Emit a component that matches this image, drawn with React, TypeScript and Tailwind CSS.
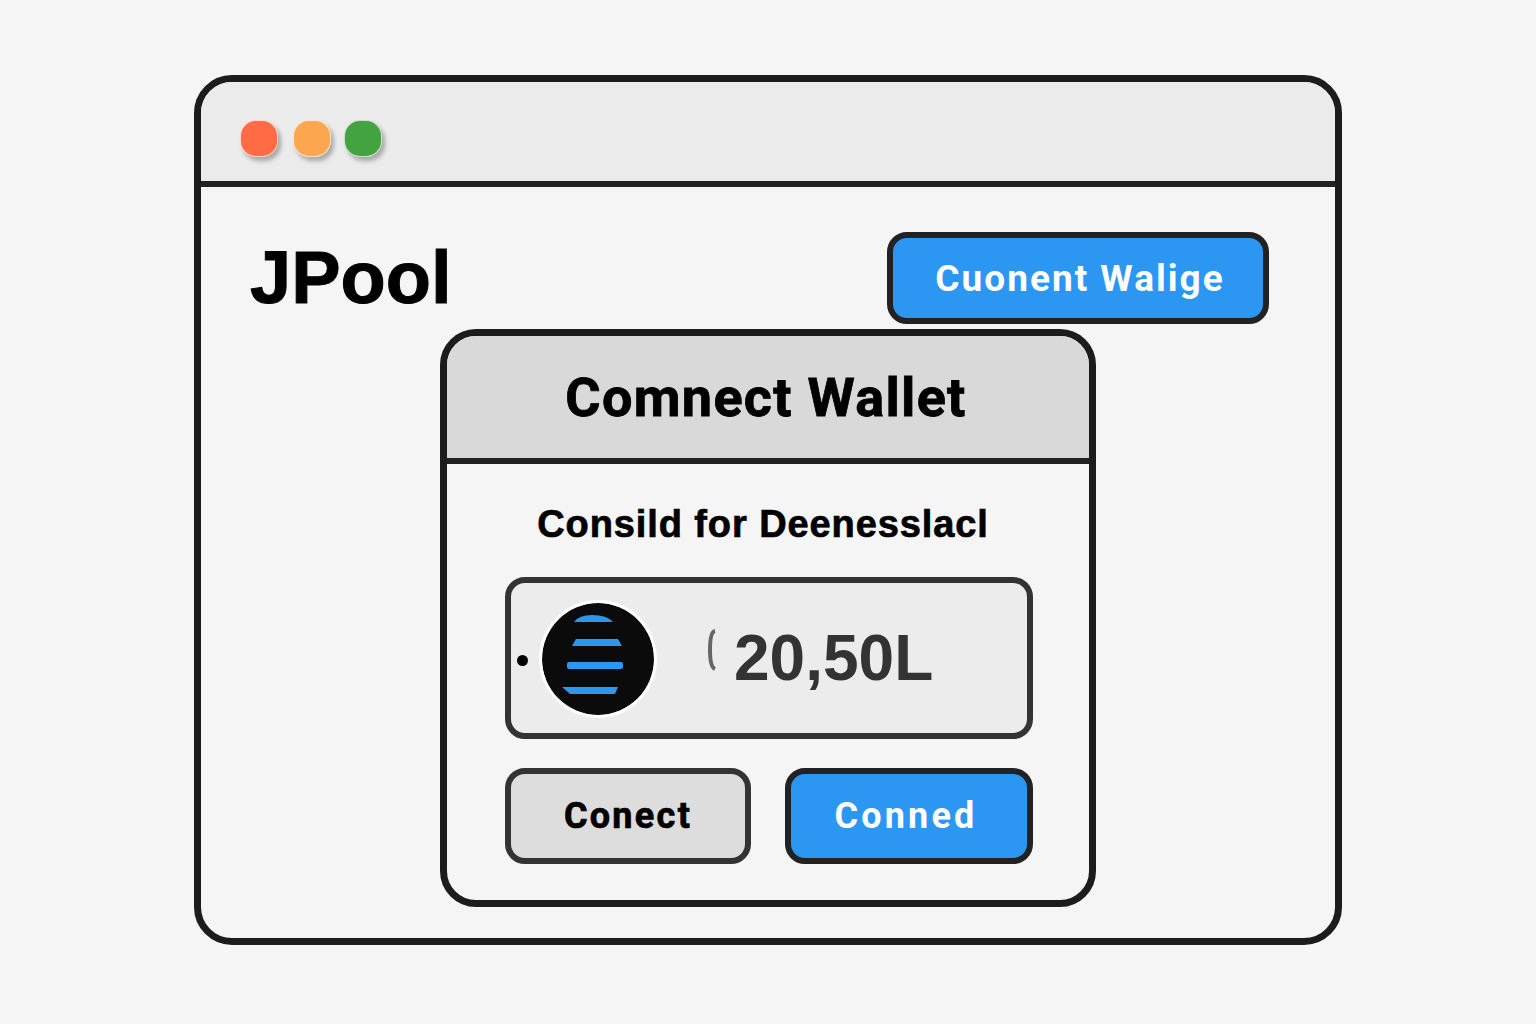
import React from 'react'

const sans = "font-['Liberation_Sans',Arial,sans-serif]"
const robo = "font-['Roboto',Arial,sans-serif]"

const TokenIcon = () => (
  <svg width="112" height="112" viewBox="0 0 112 112" className="shrink-0 rounded-full shadow-[0_0_0_3px_#ffffff]">
    <circle cx="56" cy="56" r="56" fill="#0b0b0c" />
    <g fill="#2b97ee" className="blur-[0.5px]">
      <path d="M32 19 Q37 12 50 12 Q65 12 71 19 Z" />
      <path d="M34 36 H76 L80 43 H30 Z" />
      <rect x="25" y="59" width="56" height="7" rx="2" />
      <path d="M20 84 H76 L73 91 H28 Z" />
    </g>
  </svg>
)

const Dot = ({ color, className }: { color: string; className?: string }) => (
  <div
    className={`h-[37px] w-[38px] rounded-[16px] border border-white/70 shadow-[3px_4px_4px_rgba(0,0,0,0.28)] ${color} ${className || ''}`}
  />
)

const App = () => {
  return (
    <div className={`flex h-screen w-full justify-center bg-[#f5f5f5] pt-[75px] ${sans}`}>
      <div className="h-[870px] w-[1148px] overflow-hidden rounded-[38px] border-[7px] border-[#1c1c1c] bg-[#f5f5f5]">
        {/* title bar */}
        <div className="flex h-[105px] items-center border-b-[6px] border-[#222222] bg-[#ebebeb] pl-[39px] pt-[14px]">
          <Dot color="bg-[#ff6b45]" />
          <Dot color="bg-[#fca650]" className="ml-[15px]" />
          <Dot color="bg-[#43a340]" className="ml-[13px]" />
        </div>

        <div className="pt-[45px]">
          <div className="flex h-[92px] items-center justify-between pl-[49px] pr-[66px]">
            <h1 className="text-[74px] font-bold leading-none tracking-normal text-black [-webkit-text-stroke:1px_black]">JPool</h1>
            <button className={`h-[92px] w-[382px] rounded-[20px] border-[6px] border-[#222222] bg-[#2b97f2] pl-[4px] pt-[2px] text-[37px] font-bold tracking-[2px] text-white ${robo}`}>
              Cuonent Walige
            </button>
          </div>

          {/* modal */}
          <div className="ml-[239px] mt-[5px] h-[578px] w-[656px] overflow-hidden rounded-[36px] border-[7px] border-[#1c1c1c] bg-[#f5f5f5]">
            <div className={`flex h-[128px] items-center justify-center border-b-[6px] border-[#222222] bg-[#d9d9d9] pr-[4px] text-[54px] font-bold tracking-[1.3px] text-black [-webkit-text-stroke:0.8px_black] ${robo}`}>
              Comnect Wallet
            </div>
            <div className="pl-[58px] pr-[56px]">
              <p className="mt-[36px] pr-[12px] text-center text-[38px] font-bold leading-[48px] tracking-[0.9px] text-black [-webkit-text-stroke:0.7px_black]">Consild for Deenesslacl</p>
              <div className="mt-[29px] flex h-[162px] items-center rounded-[20px] border-[6px] border-[#333333] bg-[#ececec] pl-[6px]">
                <div className="mt-[5px] h-[11px] w-[11px] rounded-full bg-black" />
                <div className="ml-[14px] mt-[2px]">
                  <TokenIcon />
                </div>
                <svg width="10" height="42" viewBox="0 0 10 42" className="ml-[53px] mt-[-16px]">
                  <path d="M8 2 Q3 3 3 21 Q3 38 8 40" fill="none" stroke="#666666" strokeWidth="4" />
                </svg>
                <span className="ml-[17px] text-[64px] font-bold leading-none text-[#333333]">20,50L</span>
              </div>
              <div className="mt-[29px] flex gap-[34px]">
                <button className={`h-[96px] w-[246px] rounded-[20px] border-[6px] border-[#333333] bg-[#dddddd] text-[36px] font-bold tracking-[2.3px] text-black [-webkit-text-stroke:0.7px_black] ${robo}`}>
                  Conect
                </button>
                <button className={`h-[96px] w-[248px] rounded-[20px] border-[6px] border-[#222222] bg-[#2b97f2] pr-[6px] text-[36px] font-bold tracking-[3.2px] text-white ${robo}`}>
                  Conned
                </button>
              </div>
            </div>
          </div>
        </div>
      </div>
    </div>
  )
}

export default App
